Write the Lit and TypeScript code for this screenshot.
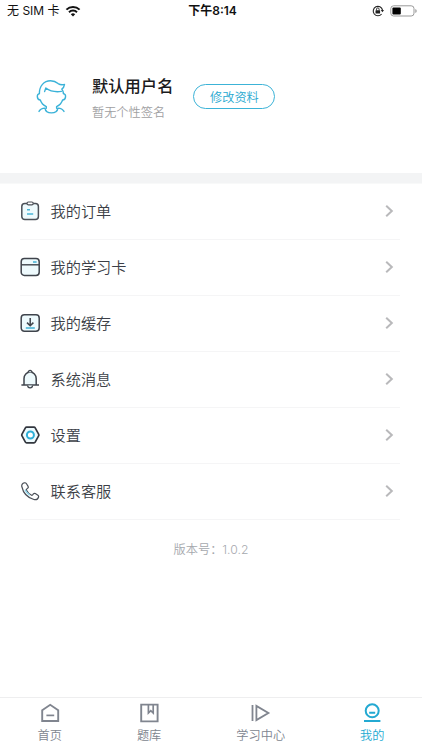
import { LitElement, html, css, svg } from "lit";
import { customElement, property } from "lit/decorators.js";

const icons: Record<string, unknown> = {
  order: svg`<rect x="1.8" y="2.6" width="16.6" height="16" rx="3" fill="#eefafd" stroke="#4b5058" stroke-width="1.5"/><rect x="7" y="1" width="6.2" height="2.8" rx="1.4" fill="#fff" stroke="#4b5058" stroke-width="1.2"/><path d="M7 8.8h3M7 13h6.2" stroke="#49b5d6" stroke-width="1.6"/>`,
  card: svg`<rect x="1.2" y="1.6" width="18" height="16.8" rx="3.2" fill="#eefafd" stroke="#3f444c" stroke-width="1.5"/><path d="M1.2 7.8h18" stroke="#3f444c" stroke-width="1.4"/><path d="M13 5h3.6" stroke="#49b5d6" stroke-width="1.6"/>`,
  cache: svg`<rect x="1.2" y="1.7" width="18" height="16.6" rx="3.2" fill="#eefafd" stroke="#3f444c" stroke-width="1.5"/><path d="M10.2 5v7.6M7 9.6l3.2 3.2 3.2-3.2" fill="none" stroke="#3f444c" stroke-width="1.5"/><path d="M5.8 15h9" stroke="#49b5d6" stroke-width="1.6"/>`,
  bell: svg`<path d="M4 16V9.6a6.1 6.5 0 0 1 12.2 0V16" fill="#eefafd" stroke="#3f444c" stroke-width="1.5"/><path d="M1.4 16h17.6" stroke="#3f444c" stroke-width="1.5"/><path d="M8.3 3.2a1.8 1.8 0 1 1 3.6 0M7.7 16.4a2.4 2.4 0 0 0 4.8 0" fill="#eefafd" stroke="#3f444c" stroke-width="1.3"/>`,
  settings: svg`<path d="M6.6 2.2h7.4q.8 0 1.2.7l3.4 6.2q.5.9 0 1.8l-3.4 6.2q-.4.7-1.2.7H6.6q-.8 0-1.2-.7L2 10.9q-.5-.9 0-1.8l3.4-6.2q.4-.7 1.2-.7z" fill="#eefafd" stroke="#33373f" stroke-width="1.7"/><circle cx="10.4" cy="10" r="3.5" fill="#fff" stroke="#2eafd8" stroke-width="2"/>`,
  phone: svg`<path d="M4.3 1.8C2.6 2.1 1.4 3.7 1.8 5.5c1.3 6.1 5.9 11.2 12.1 13 1.9.5 4-.5 4.6-2.3.3-.9.1-1.5-.6-2l-2.6-1.6c-.7-.4-1.4-.3-1.9.3l-.8 1c-.4.4-.9.5-1.4.2-2-1.2-3.6-2.8-4.7-4.9-.3-.5-.1-1 .3-1.3l1-.8c.5-.4.6-1.1.3-1.7L6.5 2.8c-.5-.8-1.1-1.2-2.2-1z" fill="#fff" stroke="#4b5058" stroke-width="1.2"/><path d="M5 8.8c1.1 2.3 2.6 4 4.8 5.4" fill="none" stroke="#8ed3e8" stroke-width="1.5"/>`,
  home: svg`<path d="M2.2 7.2 10.2 1.8l8 5.4V18h-16z" fill="none" stroke="currentColor" stroke-width="1.9"/><path d="M6.4 12.4h7.8" stroke="currentColor" stroke-width="1.7"/>`,
  bank: svg`<path d="M2.2 1.6h16.4v16.8H2.2z" fill="none" stroke="currentColor" stroke-width="1.9"/><path d="M9.4 2v8l2.4-2.4 2.4 2.4V2" fill="none" stroke="currentColor" stroke-width="1.7"/>`,
  study: svg`<path d="M1.5 2v16M5.4 2.9v14.2L17.4 10z" fill="none" stroke="currentColor" stroke-width="1.8"/>`,
  mine: svg`<circle cx="10.2" cy="7.8" r="6.5" fill="none" stroke="currentColor" stroke-width="2"/><path d="M7.2 9.8h6M2 18h16.4" stroke="currentColor" stroke-width="2"/>`,
};

@customElement("menu-row")
class MenuRow extends LitElement {
  @property() icon = "";
  @property() label = "";
  static styles = css`
    :host { display: flex; align-items: center; box-sizing: border-box; height: 56px; margin: 0 22px 0 20px; border-bottom: 1px solid #f5f5f6; }
    .icon { width: 20px; height: 20px; margin-bottom: 2px; flex: none; }
    .label { flex: 1; margin-left: 10.5px; font-size: 15.2px; color: #3c3f47; line-height: 20px; }
    .arrow { width: 10px; height: 14px; margin: 0 6px 2px 0; }
  `;
  render() {
    return html`<svg class="icon" viewBox="0 0 20 20">${icons[this.icon]}</svg>
      <span class="label">${this.label}</span>
      <svg class="arrow" viewBox="0 0 10 14"><path d="M2.2 1.8l5.6 5.2-5.6 5.2" fill="none" stroke="#b9b9bb" stroke-width="2" /></svg>`;
  }
}

@customElement("app-root")
class AppRoot extends LitElement {
  static styles = css`
    :host { display: flex; flex-direction: column; height: 750px; background: #fff; overflow: hidden; font-family: Inter, "Noto Sans CJK SC", sans-serif; font-weight: 350; }
    .status { display: grid; grid-template-columns: 1fr auto 1fr; align-items: center; height: 22px; padding: 0 4px 0 7px; font: 400 12px/22px Inter, "Noto Sans CJK SC", sans-serif; color: #111; }
    .left, .right { display: flex; align-items: center; }
    .left { gap: 5px; }
    .right { justify-content: flex-end; gap: 6px; }
    .time { font-weight: 600; }
    .profile { display: flex; align-items: flex-start; box-sizing: border-box; height: 151px; padding: 52px 0 0 32px; }
    .avatar { width: 40px; height: 42px; margin-top: 2px; }
    .names { margin-left: 20px; }
    .name { font-size: 16.3px; line-height: 24px; font-weight: 500; color: #1b1b1d; }
    .sign { margin-top: 3px; font-size: 12.2px; line-height: 24px; color: #a0a0a2; }
    .edit { box-sizing: border-box; width: 82px; height: 25px; margin: 10px 0 0 20px; padding: 1px 0 0; border: 1.3px solid #3cb3d7; border-radius: 13px; background: #fff; color: #26a8d0; font: 350 12.2px/22px "Noto Sans CJK SC", sans-serif; }
    .band { box-sizing: border-box; height: 11px; border-bottom: 1px solid #f8f9f9; background: #f3f4f5; }
    .version { margin-top: 18px; text-align: center; font-size: 12.2px; line-height: 24px; color: #a6a9ae; }
    .tabs { display: flex; justify-content: space-around; box-sizing: border-box; height: 53px; margin-top: auto; padding-top: 5px; border-top: 1px solid #eeeeef; }
    .tab { display: flex; flex-direction: column; align-items: center; font-size: 12.2px; line-height: 20px; color: #80858f; }
    .tab svg { width: 20px; height: 20px; margin-bottom: 3px; }
    .tab.active { color: #23a9d2; }
  `;
  render() {
    const rows = [["order", "我的订单"], ["card", "我的学习卡"], ["cache", "我的缓存"], ["bell", "系统消息"], ["settings", "设置"], ["phone", "联系客服"]];
    const tabs = [["home", "首页"], ["bank", "题库"], ["study", "学习中心"], ["mine", "我的"]];
    return html`
      <div class="status">
        <div class="left"><span>无 SIM 卡</span>
          <svg width="16" height="12" viewBox="0 0 16 12" fill="none" stroke="#111" stroke-width="2"><path d="M1.4 4.6a9.5 9.5 0 0 1 13.2 0M4 7.2a5.8 5.8 0 0 1 8 0"/><path d="M8 11.4 5.8 9.2a3.2 3.2 0 0 1 4.4 0z" fill="#111" stroke="none"/></svg>
        </div>
        <span class="time">下午8:14</span>
        <div class="right">
          <svg width="12" height="12" viewBox="0 0 12 12"><path d="M9.6 9A4.7 4.7 0 1 1 10.5 5" fill="none" stroke="#222" stroke-width="1.1"/><path d="M8.8 5h3.2l-1.6 2.2z" fill="#222"/><rect x="3.5" y="5.2" width="4.6" height="3.4" rx=".5" fill="#222"/><path d="M4.5 5.4V4.2a1.3 1.3 0 0 1 2.6 0v1.2" fill="none" stroke="#222" stroke-width=".9"/></svg>
          <svg width="28" height="12" viewBox="0 0 28 12"><rect x=".8" y=".8" width="23.2" height="10.2" rx="2.8" fill="#fff" stroke="#999" stroke-width="1"/><rect x="2.4" y="2.4" width="8.4" height="7" rx="1" fill="#000"/><path d="M25.3 4v4q1.4-.6 1.4-2t-1.4-2z" fill="#999"/></svg>
        </div>
      </div>
      <div class="profile">
        <svg class="avatar" viewBox="0 0 40 42" fill="none" stroke="#3ab2d8" stroke-width="1.4" stroke-linejoin="round" stroke-linecap="round"><path d="M7.4 17.6C7.2 10 12 4.8 18.500 4.800c3.400 0 5.800 1.200 7.600 2.800 2 1.200 4.200 1.300 6.400.8-.3 2.200-1.200 3.700-2.700 4.700 1 1.300 1.600 2.800 1.700 4.500"/><path d="M12.600 15.600l1.200-3.600c4.400 3.300 9.600 4.300 15.600 3.400"/><path d="M7.400 17.600c-3 .4-2.800 6.200.9 6.400 1 3 3 5.200 6 6.700v1.500M31.500 17.600c3 .4 2.800 6.200-.9 6.400-1 3-3 5.200-6 6.700v1.500"/><path d="M7 35.400c1.200-2.200 3.200-3.200 6-3.300.8 6.400 12 6.400 12.900 0 2.800.1 4.900 1.100 6.100 3.300"/></svg>
        <div class="names"><div class="name">默认用户名</div><div class="sign">暂无个性签名</div></div>
        <button class="edit">修改资料</button>
      </div>
      <div class="band"></div>
      ${rows.map(([i, l]) => html`<menu-row .icon=${i} .label=${l}></menu-row>`)}
      <div class="version">版本号：1.0.2</div>
      <div class="tabs">
        ${tabs.map(([i, l]) => html`<div class="tab ${i === "mine" ? "active" : ""}"><svg viewBox="0 0 20 20">${icons[i]}</svg><span>${l}</span></div>`)}
      </div>`;
  }
}
